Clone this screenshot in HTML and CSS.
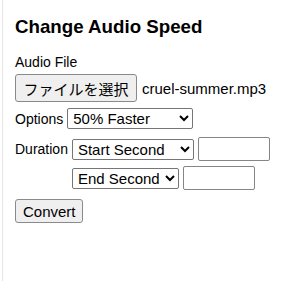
FILE: index.html
```html
<!DOCTYPE html>
<html lang="en">
<head>
    <meta charset="UTF-8">
    <meta name="viewport" content="width=device-width, initial-scale=1.0">
    <title>Change Audio Speed</title>
    <link rel="stylesheet" href="styles.css">
</head>
<body>
    <div class="page">
        <h3>Change Audio Speed</h3>

        <label class="field-label">Audio File</label>
        <div class="row file-row">
            <button class="file-btn" type="button">ファイルを選択</button>
            <span class="file-name">cruel-summer.mp3</span>
        </div>

        <div class="row options-row">
            <label>Options</label>
            <select class="speed-select">
                <option>50% Faster</option>
                <option>25% Faster</option>
                <option>25% Slower</option>
                <option>50% Slower</option>
            </select>
        </div>

        <div class="row duration-row">
            <label>Duration</label>
            <select class="start-select">
                <option>Start Second</option>
            </select>
            <input type="text" class="sec-input">
        </div>

        <div class="row end-row">
            <label class="spacer">Duration</label>
            <select class="end-select">
                <option>End Second</option>
            </select>
            <input type="text" class="sec-input">
        </div>

        <button class="convert-btn" type="button">Convert</button>
    </div>
</body>
</html>
```

FILE: styles.css
```css
* {
    box-sizing: border-box;
}

body {
    margin: 0;
    font-family: 'Liberation Sans', Arial, sans-serif;
    color: #000;
    background: #fff;
}

.page {
    min-height: 100vh;
    margin-left: 2px;
    padding: 16px 12px;
    border-left: 1px solid #e6e6e6;
}

h3 {
    margin: 0 0 16px;
    font-size: 18.72px;
}

.field-label {
    display: block;
    font-size: 14px;
    margin-bottom: 4px;
}

.row {
    display: flex;
    align-items: center;
    gap: 4px;
    font-size: 14px;
}

.file-row {
    margin-bottom: 6px;
}

.options-row {
    margin-bottom: 8px;
}

.duration-row {
    margin-bottom: 5px;
}

.end-row {
    margin-bottom: 9px;
}

.spacer {
    visibility: hidden;
}

.file-btn,
.convert-btn {
    font-family: 'Liberation Sans', Arial, sans-serif;
    color: #000;
    background-color: #efefef;
    border: 1px solid #8a8a8a;
    border-radius: 3px;
    padding: 0 7px;
}

.file-btn {
    height: 28px;
    width: 122px;
    font-family: 'Noto Sans CJK JP', sans-serif;
    font-size: 15px;
}

.file-name {
    font-size: 15px;
    margin-left: 1px;
}

select {
    height: 21px;
    font-family: 'Liberation Sans', Arial, sans-serif;
    font-size: 15px;
    color: #000;
    background-color: #fff;
    border: 1px solid #767676;
    border-radius: 2px;
    padding: 0 1px;
}

.speed-select {
    width: 126px;
}

.start-select {
    width: 122px;
}

.end-select {
    width: 107px;
}

.sec-input {
    width: 72px;
    height: 24px;
    border: 1px solid #858585;
    border-radius: 2px;
    font-size: 15px;
}

.convert-btn {
    height: 24px;
    width: 68px;
    font-size: 15px;
}
```
